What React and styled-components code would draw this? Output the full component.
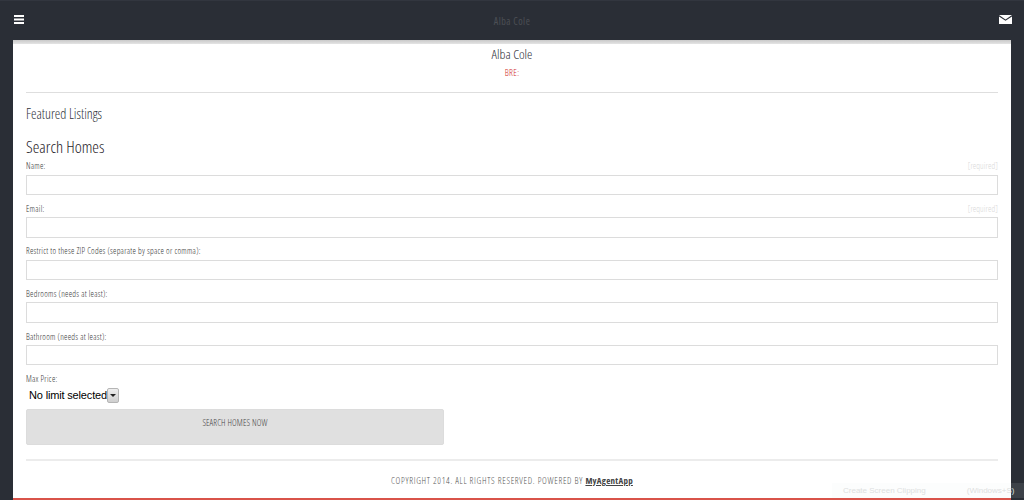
import React from "react";
import styled, { createGlobalStyle } from "styled-components";

const Global = createGlobalStyle`
  html, body { margin: 0; padding: 0; height: 500px; overflow: hidden; background: #2a2e36; }
  * { box-sizing: border-box; }
  body { font-family: "Open Sans", "Liberation Sans", sans-serif; font-stretch: 75%; font-weight: 300; color: #444; }
`;
const Page = styled.div`
  position: relative; width: 1024px; height: 500px; overflow: hidden;
  display: flex; flex-direction: column; background: #2a2e36;
`;
const TopBar = styled.header`
  height: 40px; flex: none; display: flex; align-items: flex-start; justify-content: space-between;
  padding: 14px 12px 0 14px; background: #2a2e36; border-top: 1px solid #32363f; position: relative;
`;
const TopTitle = styled.div`
  position: absolute; left: 0; right: 0; top: 14px; text-align: center;
  font-size: 10px; line-height: 12px; letter-spacing: .5px; font-weight: 400; color: #4c4f55;
`;
const IconSvg = styled.svg`display: block; color: #fff;`;
const Sheet = styled.main`
  flex: 1; margin: 0 13px; padding: 0 13px;
  display: flex; flex-direction: column; min-height: 0;
  border-bottom: 2px solid #d9534a;
  background: linear-gradient(#c9c9c9, #e4e4e4) top / 100% 4px no-repeat, #fff;
`;
const Agent = styled.h2`
  margin: 6px 0 0; font-size: 13.5px; line-height: 16px; font-weight: 300; text-align: center; color: #2f3239;
`;
const Brand = styled.div`
  margin-top: 5px; font-size: 9px; line-height: 12px; font-weight: 300; text-align: center; color: #d0281e; letter-spacing: .35px;
`;
const Rule = styled.hr`
  margin: ${p => p.$top}px 0 0; border: 0; height: ${p => p.$h}px; background: ${p => p.$c}; flex: none;
`;
const Featured = styled.h3`
  margin: 13px 0 0; font-size: 13.9px; line-height: 16px; font-weight: 300; color: #2f3239;
`;
const SearchTitle = styled.h3`
  margin: 15px 0 0; font-size: 16.8px; line-height: 20px; font-weight: 300; color: #1f2229;
`;
const Field = styled.div`
  display: flex; flex-direction: column; height: 42.6px; flex: none;
`;
const LabelRow = styled.div`
  display: flex; justify-content: space-between; align-items: center;
  height: 17.6px; flex: none;
`;
const Label = styled.label`font-size: 8.5px; line-height: 11px; font-weight: 300; letter-spacing: .27px; color: #333;`;
const Req = styled.span`font-size: 8.5px; line-height: 11px; letter-spacing: .1px; color: #d8d8d8;`;
const Input = styled.input`
  display: block; width: 100%; height: 20.5px; border: 1px solid #dcdcdc; background: #fff; padding: 0 4px; outline: none; flex: none;
`;
const Fields = styled.div`display: flex; flex-direction: column;`;
const PriceLabel = styled(LabelRow)`height: 18px;`;
const SelectRow = styled.div`display: flex; align-items: center; height: 15px; padding-left: 3px; flex: none;`;
const SelectValue = styled.span`font-family: "Liberation Sans", sans-serif; font-stretch: 100%; font-weight: 400; font-size: 11px; letter-spacing: -.16px; line-height: 15px; color: #000;`;
const SelectArrow = styled.span`
  width: 12px; height: 15px; display: flex; align-items: center; justify-content: center;
  border: 1px solid #b5b5b5; border-radius: 2px; background: linear-gradient(#eee, #cfcfcf);
  &::after { content: ""; border: 3px solid transparent; border-top: 3px solid #222; border-bottom: 0; }
`;
const Submit = styled.button`
  display: block; width: 418px; height: 36px; margin-top: 6px; flex: none; padding: 0 0 8px;
  border: 1px solid #dcdcdc; border-radius: 2px; background: #e0e0e0; color: #444;
  font: inherit; font-size: 8.8px; font-stretch: 75%; font-weight: 300; letter-spacing: .15px; text-transform: uppercase;
`;
const Copy = styled.footer`
  margin-top: 14px; text-align: center; font-size: 9px; line-height: 12px; font-weight: 300; letter-spacing: .68px; color: #555;
`;
const Link = styled.a`color: #444; font-weight: 700; text-decoration: underline; letter-spacing: .25px;`;
const Tip = styled.div`
  position: absolute; left: 832px; right: 0; top: 483px; height: 15px;
  display: flex; align-items: center; gap: 41px; white-space: nowrap; overflow: hidden;
  padding-left: 11px; background: rgba(225, 240, 240, .1);
  font-family: "Liberation Sans", sans-serif; font-stretch: 100%; font-weight: 400; font-size: 8px; color: #dde0e0;
`;

const fields = [
  ["Name:", true],
  ["Email:", true],
  ["Restrict to these ZIP Codes (separate by space or comma):"],
  ["Bedrooms (needs at least):"],
  ["Bathroom (needs at least):"],
];

export default function App() {
  return (
    <Page>
      <Global />
      <TopBar>
        <IconSvg width="10" height="9" viewBox="0 0 10 9" fill="currentColor">
          <rect y="0" width="10" height="2" /><rect y="3.5" width="10" height="2" /><rect y="7" width="10" height="2" />
        </IconSvg>
        <TopTitle>Alba Cole</TopTitle>
        <IconSvg width="13" height="9" viewBox="0 0 13 9" fill="currentColor">
          <path d="M0 0h13L6.5 4.4z" /><path d="M0 1.4 6.5 5.8 13 1.4V9H0z" />
        </IconSvg>
      </TopBar>
      <Sheet>
        <Agent>Alba Cole</Agent>
        <Brand>BRE:</Brand>
        <Rule $top={13} $h={1} $c="#dedede" />
        <Featured>Featured Listings</Featured>
        <SearchTitle>Search Homes</SearchTitle>
        <Fields>
          {fields.map(([l, req]) => (
            <Field key={l}>
              <LabelRow>
                <Label>{l}</Label>
                {req && <Req>[required]</Req>}
              </LabelRow>
              <Input />
            </Field>
          ))}
        </Fields>
        <PriceLabel><Label>Max Price:</Label></PriceLabel>
        <SelectRow>
          <SelectValue>No limit selected</SelectValue>
          <SelectArrow />
        </SelectRow>
        <Submit>Search Homes Now</Submit>
        <Rule $top={14} $h={2} $c="#ececec" />
        <Copy>COPYRIGHT 2014. ALL RIGHTS RESERVED. POWERED BY <Link>MyAgentApp</Link></Copy>
      </Sheet>
      <Tip><span>Create Screen Clipping</span><span>(Windows+S)</span></Tip>
    </Page>
  );
}
